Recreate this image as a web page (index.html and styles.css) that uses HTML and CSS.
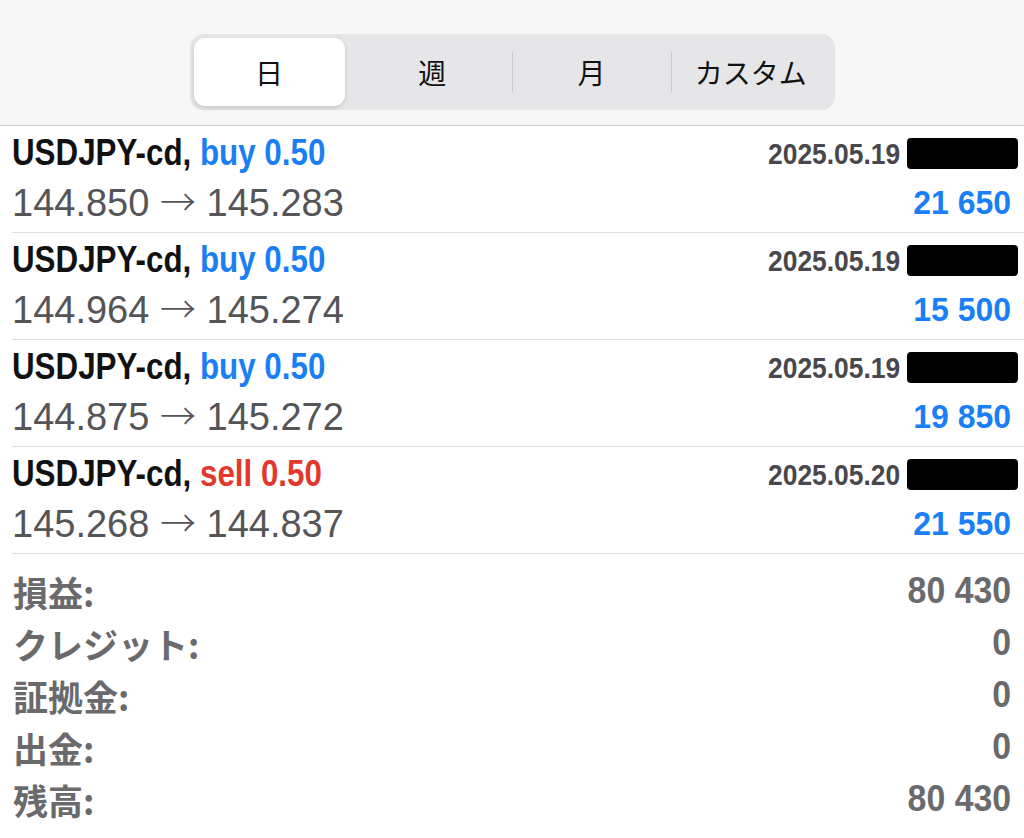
FILE: index.html
```html
<!DOCTYPE html>
<html lang="ja">
<head>
    <meta charset="UTF-8">
    <meta name="viewport" content="width=device-width, initial-scale=1.0">
    <title>履歴</title>
    <link rel="stylesheet" href="styles.css">
</head>
<body>

    <header class="top-bar">
        <div class="segmented">
            <div class="segment active">日</div>
            <div class="segment">週</div>
            <div class="segment sep">月</div>
            <div class="segment sep">カスタム</div>
        </div>
    </header>

    <main class="history">
        <div class="trade">
            <div class="trade-head">
                <span class="symbol">USDJPY-cd, <span class="side buy">buy 0.50</span></span>
                <span class="trade-time"><span class="date">2025.05.19</span><span class="redact"></span></span>
            </div>
            <div class="trade-body">
                <span class="prices">144.850 <span class="arrow">→</span> 145.283</span>
                <span class="profit">21 650</span>
            </div>
        </div>
        <div class="trade">
            <div class="trade-head">
                <span class="symbol">USDJPY-cd, <span class="side buy">buy 0.50</span></span>
                <span class="trade-time"><span class="date">2025.05.19</span><span class="redact"></span></span>
            </div>
            <div class="trade-body">
                <span class="prices">144.964 <span class="arrow">→</span> 145.274</span>
                <span class="profit">15 500</span>
            </div>
        </div>
        <div class="trade">
            <div class="trade-head">
                <span class="symbol">USDJPY-cd, <span class="side buy">buy 0.50</span></span>
                <span class="trade-time"><span class="date">2025.05.19</span><span class="redact"></span></span>
            </div>
            <div class="trade-body">
                <span class="prices">144.875 <span class="arrow">→</span> 145.272</span>
                <span class="profit">19 850</span>
            </div>
        </div>
        <div class="trade">
            <div class="trade-head">
                <span class="symbol">USDJPY-cd, <span class="side sell">sell 0.50</span></span>
                <span class="trade-time"><span class="date">2025.05.20</span><span class="redact"></span></span>
            </div>
            <div class="trade-body">
                <span class="prices">145.268 <span class="arrow">→</span> 144.837</span>
                <span class="profit">21 550</span>
            </div>
        </div>

        <div class="totals">
            <div class="total-row"><span class="label">損益:</span><span class="value">80 430</span></div>
            <div class="total-row"><span class="label">クレジット:</span><span class="value">0</span></div>
            <div class="total-row"><span class="label">証拠金:</span><span class="value">0</span></div>
            <div class="total-row"><span class="label">出金:</span><span class="value">0</span></div>
            <div class="total-row"><span class="label">残高:</span><span class="value">80 430</span></div>
        </div>
    </main>

</body>
</html>
```

FILE: styles.css
```css
:root {
    --font-latin: "Liberation Sans", "Noto Sans CJK JP", Arial, sans-serif;
    --font-jp: "Noto Sans CJK JP", "Liberation Sans", sans-serif;
    --blue: #1a7ff5;
    --red: #e2382c;
    --text: #111111;
    --text-grey: #555558;
    --date-grey: #48484c;
    --total-grey: #6a6a6c;
    --line: #dedede;
}

html, body {
    margin: 0;
    background: #ffffff;
}

body {
    font-family: var(--font-latin);
    color: var(--text);
    width: 1024px;
    height: 838px;
    overflow: hidden;
}

/* header with the period switch */
.top-bar {
    height: 126px;
    box-sizing: border-box;
    background: #f7f7f7;
    border-bottom: 1px solid #cacaca;
    display: flex;
    justify-content: center;
    padding-top: 34px;
}

.segmented {
    width: 645px;
    height: 76px;
    box-sizing: border-box;
    padding: 4px;
    background: #e6e6e9;
    border-radius: 14px;
    display: grid;
    grid-template-columns: repeat(4, 1fr);
}

.segment {
    display: flex;
    align-items: center;
    justify-content: center;
    font-family: var(--font-jp);
    font-size: 28px;
    color: #111;
    position: relative;
}

.segment.sep::before {
    content: "";
    position: absolute;
    left: 0;
    top: 14px;
    bottom: 14px;
    width: 1px;
    background: #c9c9cd;
}

.segment.active {
    isolation: isolate;
    padding-right: 8px;
}

.segment.active::after {
    content: "";
    position: absolute;
    top: 0;
    bottom: 0;
    left: 0;
    right: 8px;
    z-index: -1;
    background: #ffffff;
    border-radius: 11px;
    box-shadow: 0 2px 5px rgba(0, 0, 0, 0.14);
}

/* trade list */
.history {
    padding-left: 12px;
}

.trade {
    height: 107px;
    box-sizing: border-box;
    border-bottom: 1px solid var(--line);
    display: flex;
    flex-direction: column;
}

.trade-head {
    height: 54px;
    display: flex;
    align-items: center;
    justify-content: space-between;
    padding-right: 6px;
}

.trade-body {
    height: 45px;
    display: flex;
    align-items: center;
    justify-content: space-between;
    padding-right: 13px;
}

.symbol {
    display: inline-block;
    font-size: 36px;
    font-weight: 700;
    transform: scaleX(0.87);
    transform-origin: left center;
    white-space: nowrap;
}

.side.buy { color: var(--blue); }
.side.sell { color: var(--red); }

.trade-time {
    display: flex;
    align-items: center;
}

.date {
    display: inline-block;
    font-size: 30px;
    font-weight: 700;
    color: var(--date-grey);
    transform: scaleX(0.88);
    transform-origin: right center;
    margin-right: 7px;
    margin-top: 2px;
}

.redact {
    width: 111px;
    height: 31px;
    background: #000;
    border-radius: 4px;
}

.prices {
    font-size: 38px;
    line-height: 40px;
    color: var(--text-grey);
    white-space: nowrap;
}

.prices .arrow {
    font-family: var(--font-jp);
    font-size: 36px;
    font-weight: 300;
    line-height: 1;
}

.profit {
    display: inline-block;
    font-size: 34px;
    font-weight: 700;
    color: var(--blue);
    transform: scaleX(0.94);
    transform-origin: right center;
}

/* summary */
.totals {
    padding: 11px 13px 0 1px;
}

.total-row {
    height: 52px;
    display: flex;
    align-items: center;
    justify-content: space-between;
}

.total-row .label {
    font-family: var(--font-jp);
    font-size: 35px;
    font-weight: 700;
    color: var(--total-grey);
    line-height: 1;
}

.total-row .value {
    display: inline-block;
    font-size: 36px;
    font-weight: 700;
    color: var(--total-grey);
    transform: scaleX(0.94);
    transform-origin: right center;
}
```
